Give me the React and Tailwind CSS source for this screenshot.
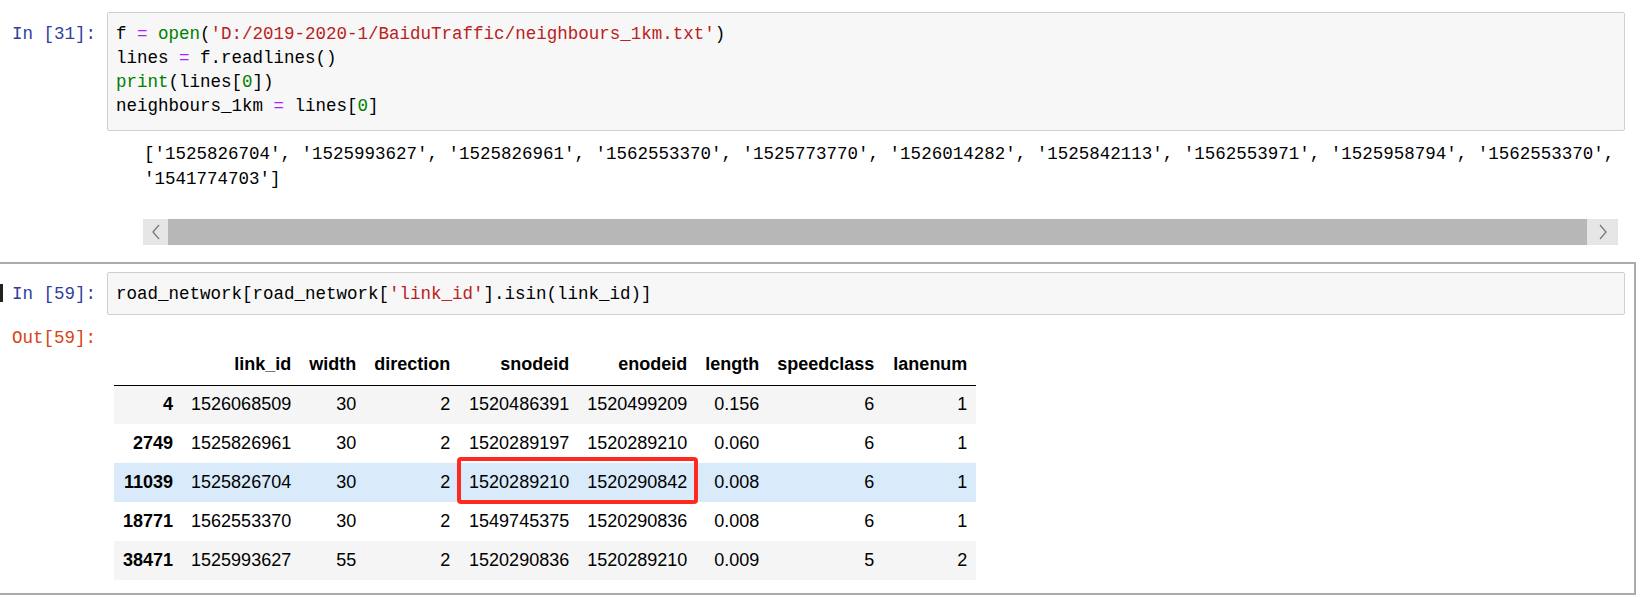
import React from "react";

const mono = { fontFamily: '"Liberation Mono", "DejaVu Sans Mono", monospace' };

const cols = [
  { key: "idx", w: "w-[68px]" },
  { key: "link_id", w: "w-[118px]" },
  { key: "width", w: "w-[65px]" },
  { key: "direction", w: "w-[93px]" },
  { key: "snodeid", w: "w-[119px]" },
  { key: "enodeid", w: "w-[118px]" },
  { key: "length", w: "w-[72px]" },
  { key: "speedclass", w: "w-[115px]" },
  { key: "lanenum", w: "w-[93px]" },
];

const rows = [
  ["4", "1526068509", "30", "2", "1520486391", "1520499209", "0.156", "6", "1"],
  ["2749", "1525826961", "30", "2", "1520289197", "1520289210", "0.060", "6", "1"],
  ["11039", "1525826704", "30", "2", "1520289210", "1520290842", "0.008", "6", "1"],
  ["18771", "1562553370", "30", "2", "1549745375", "1520290836", "0.008", "6", "1"],
  ["38471", "1525993627", "55", "2", "1520290836", "1520289210", "0.009", "5", "2"],
];

const rowBg = ["bg-[#f5f5f5]", "bg-white", "bg-[#d9ebfa]", "bg-white", "bg-[#f5f5f5]"];

function Chevron({ dir }) {
  return (
    <svg width="10" height="18" viewBox="0 0 10 18" className="block">
      {dir === "left" ? (
        <polyline points="8,2 2,9 8,16" fill="none" stroke="#7a7a7a" strokeWidth="1.3" />
      ) : (
        <polyline points="2,2 8,9 2,16" fill="none" stroke="#7a7a7a" strokeWidth="1.3" />
      )}
    </svg>
  );
}

export default function App() {
  return (
    <div className="w-[1640px] h-[597px] bg-white overflow-hidden text-black">
      {/* Cell 1 */}
      <div className="pt-[12px]" style={mono}>
        <div className="flex text-[17.5px]">
          <div className="w-[107px] shrink-0 pr-[11px] pt-[10px] text-right leading-[24px] text-[#303F9F] whitespace-pre">
            In [31]:
          </div>
          <div className="w-[1518px] h-[119px] shrink-0 border border-[#cfcfcf] rounded-[2px] bg-[#f7f7f7] pl-[8px] pt-[9px] leading-[24px] whitespace-pre">
            <div>
              f <span className="text-[#aa22ff]">=</span>{" "}
              <span className="text-[#008000]">open</span>(
              <span className="text-[#ba2121]">'D:/2019-2020-1/BaiduTraffic/neighbours_1km.txt'</span>)
            </div>
            <div>
              lines <span className="text-[#aa22ff]">=</span> f.readlines()
            </div>
            <div>
              <span className="text-[#008000]">print</span>(lines[<span className="text-[#008000]">0</span>])
            </div>
            <div>
              neighbours_1km <span className="text-[#aa22ff]">=</span> lines[<span className="text-[#008000]">0</span>]
            </div>
          </div>
        </div>
        <div className="pl-[144px] pt-[11px] text-[17.5px] leading-[25px] whitespace-pre">
          <div>
            ['1525826704', '1525993627', '1525826961', '1562553370', '1525773770', '1526014282', '1525842113', '1562553971', '1525958794', '1562553370',
          </div>
          <div>'1541774703']</div>
        </div>
        <div className="ml-[143px] mt-[27px] w-[1475px] h-[26px] flex">
          <div className="w-[25px] h-full bg-[#e6e6e6] flex items-center justify-center">
            <Chevron dir="left" />
          </div>
          <div className="flex-1 h-full bg-[#b7b7b7]" />
          <div className="w-[31px] h-full bg-[#e6e6e6] flex items-center justify-center">
            <Chevron dir="right" />
          </div>
        </div>
      </div>

      {/* Cell 2 (selected) */}
      <div className="mt-[17px] w-[1636px] h-[333px] border-t-2 border-r-2 border-b-2 border-[#ababab] pt-[8px]">
        <div className="flex text-[17.5px]" style={mono}>
          <div className="w-[107px] shrink-0 flex items-start">
            <div className="mt-[12px] w-[3px] h-[18px] bg-[#222]" />
            <div className="flex-1 pr-[11px] pt-[10px] text-right leading-[24px] text-[#303F9F] whitespace-pre">
              In [59]:
            </div>
          </div>
          <div className="w-[1518px] h-[43px] shrink-0 border border-[#cfcfcf] rounded-[2px] bg-[#f7f7f7] pl-[8px] pt-[9px] leading-[24px] whitespace-pre">
            road_network[road_network[<span className="text-[#ba2121]">'link_id'</span>].isin(link_id)]
          </div>
        </div>

        <div className="flex mt-[11px]">
          <div
            className="w-[107px] shrink-0 pr-[11px] text-right text-[17.5px] leading-[24px] text-[#D84315] whitespace-pre"
            style={mono}
          >
            Out[59]:
          </div>
          <div className="pl-[7px] pt-[18px]">
            <div
              className="relative"
              style={{ fontFamily: '"Liberation Sans", Arial, Helvetica, sans-serif' }}
            >
              <table className="table-fixed border-collapse text-[18px] leading-[21px]">
                <colgroup>
                  {cols.map((c) => (
                    <col key={c.key} className={c.w} />
                  ))}
                </colgroup>
                <thead>
                  <tr className="border-b border-black">
                    {cols.map((c) => (
                      <th key={c.key} className="h-[41px] px-[9px] py-0 text-right font-bold align-middle">
                        {c.key === "idx" ? "" : c.key}
                      </th>
                    ))}
                  </tr>
                </thead>
                <tbody>
                  {rows.map((r, i) => (
                    <tr key={i} className={rowBg[i]}>
                      {r.map((v, j) => (
                        <td
                          key={j}
                          className={
                            "h-[39px] px-[9px] py-0 text-right align-middle whitespace-nowrap" +
                            (j === 0 ? " font-bold" : "")
                          }
                        >
                          {v}
                        </td>
                      ))}
                    </tr>
                  ))}
                </tbody>
              </table>
              <div className="absolute left-[343px] top-[113px] w-[241px] h-[47px] border-4 border-[#ff2a1f] rounded-[4px]" />
            </div>
          </div>
        </div>
      </div>
    </div>
  );
}
